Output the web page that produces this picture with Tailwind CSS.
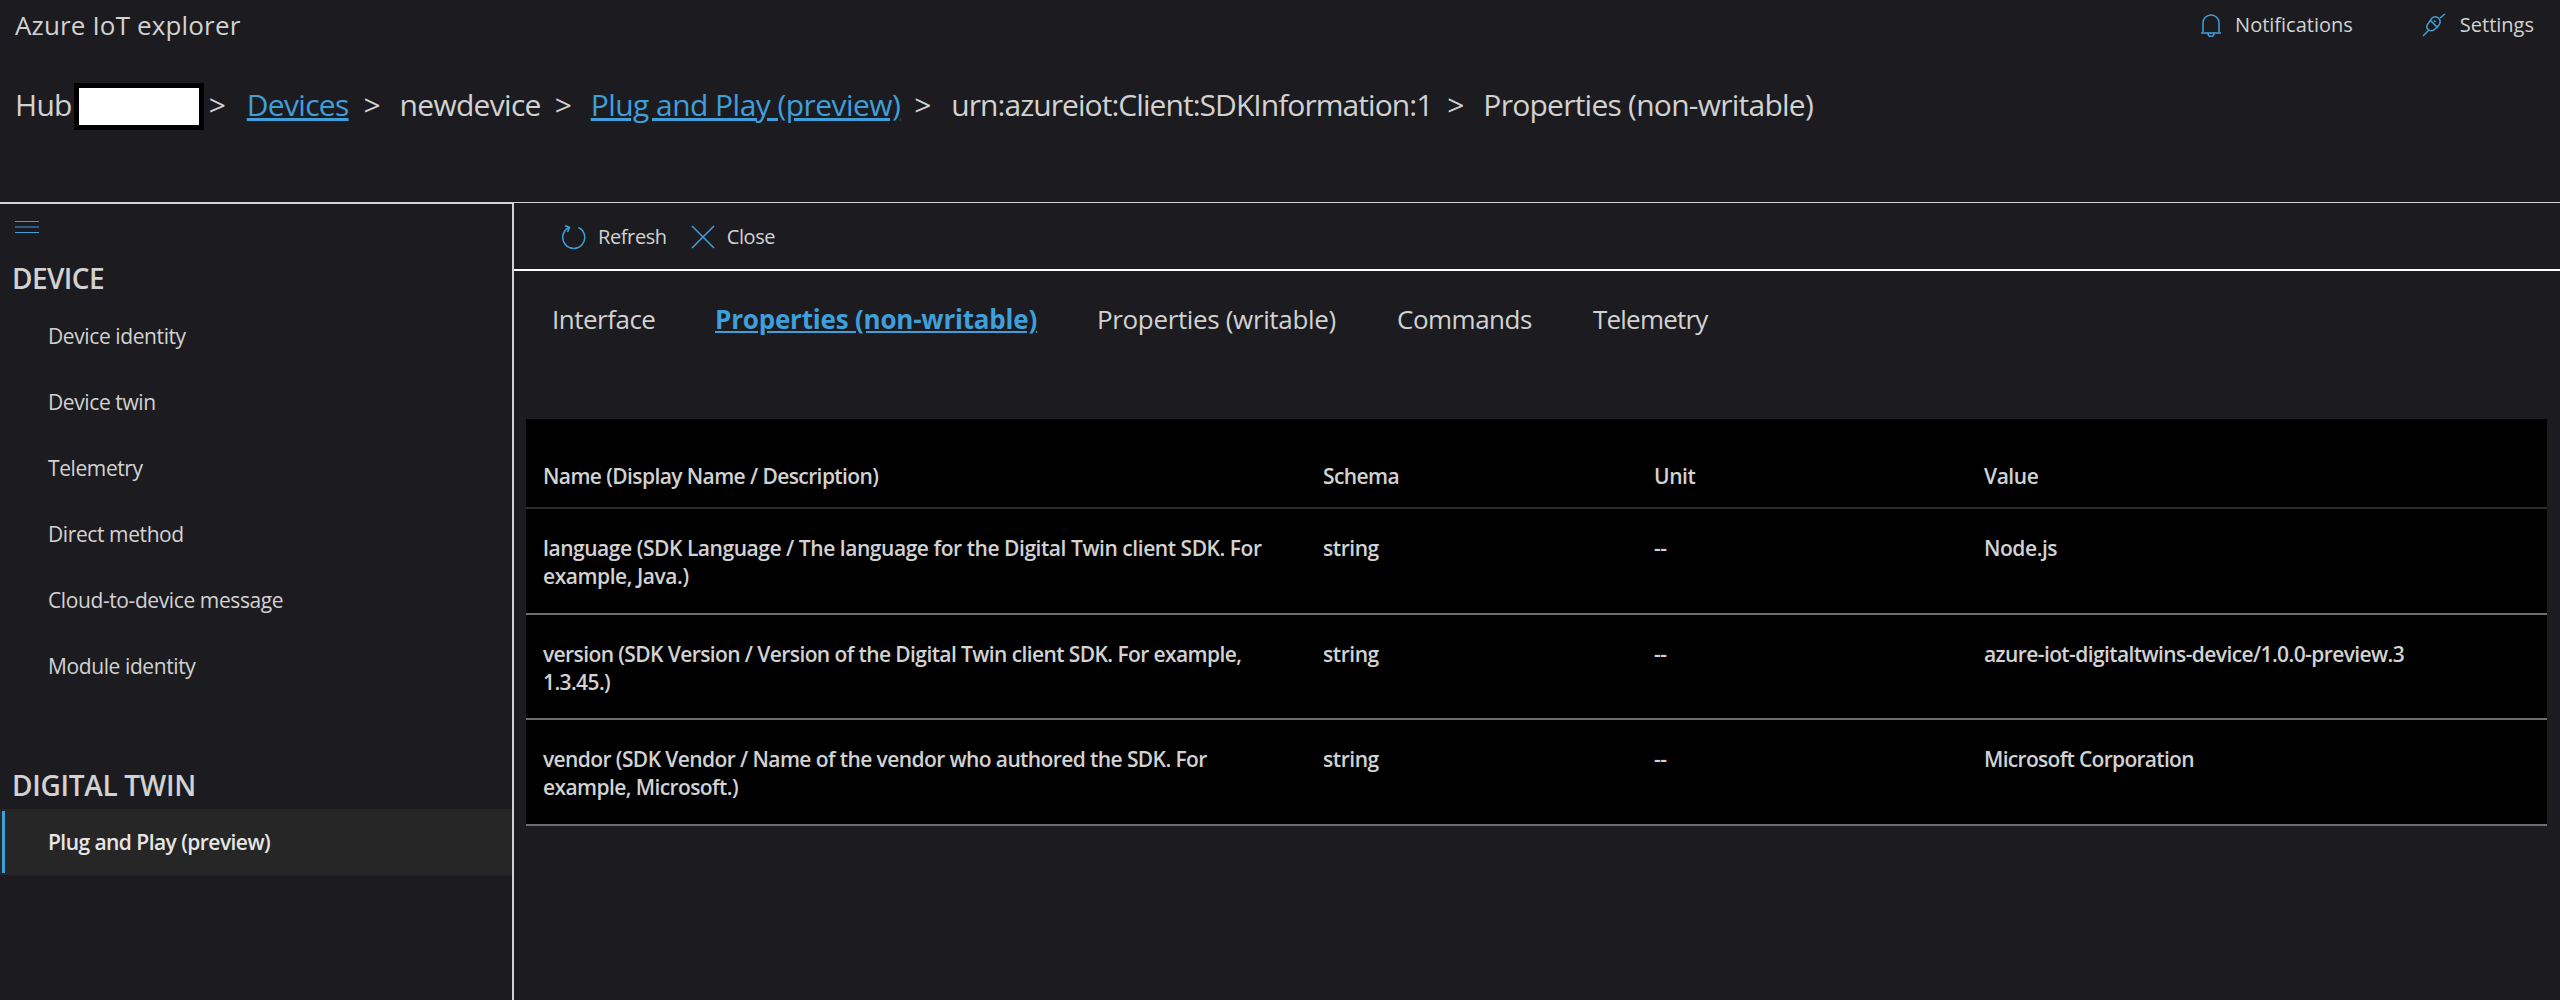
<!DOCTYPE html>
<html lang="en">
<head>
    <meta charset="UTF-8">
    <title>Azure IoT explorer</title>
    <script src="https://cdn.jsdelivr.net/npm/@tailwindcss/browser@4"></script>
</head>
<body class="bg-[#1c1c20] text-[#d2d2d2] font-['Open_Sans',sans-serif] h-screen overflow-hidden">
    <!-- Header -->
    <header class="h-[202px]">
        <div class="flex justify-between items-center h-[50px] pl-[15px] pr-[26px]">
            <h1 class="text-[26px] font-medium tracking-[0.15px]">Azure IoT explorer</h1>
            <div class="flex items-center text-[20px]">
                <svg class="w-[22px] h-[24px] text-[#3f9fdb]" viewBox="0 0 22 24" fill="none" stroke="currentColor" stroke-width="1.5">
                    <path d="M3 19V10a8 8 0 0 1 16 0v9M1 20h20M8 20.5a3 3 0 0 0 6 0"/>
                </svg>
                <span class="ml-[13px]">Notifications</span>
                <svg class="ml-[69px] w-[24px] h-[24px] text-[#3f9fdb]" viewBox="0 0 24 24" fill="none" stroke="currentColor" stroke-width="1.5">
                    <path d="M1 23l6-6M23 1l-5 4M9 8l7 7M7 9.5c-3 3-2.500 5.500-1 7s4.500 2 7-.5l4-4c2-3 1-5.500-.5-7S12 3 10 5z M12 7.500l1.500 1.500"/>
                </svg>
                <span class="ml-[14px]">Settings</span>
            </div>
        </div>
        <nav class="flex items-center h-[47px] mt-[33px] pl-[15px] text-[30px] tracking-[-0.7px]">
            <span class="-translate-y-[2px]">Hub</span>
            <span class="ml-[2px] w-[130px] h-[47px] bg-white border-[5px] border-black"></span>
            <span class="ml-[5px] w-[38px] -translate-y-[2px]">&gt;</span>
            <a href="#" class="text-[#3f9fdb] underline -translate-y-[2px]">Devices</a>
            <span class="ml-[15px] w-[36px] -translate-y-[2px]">&gt;</span>
            <span class="-translate-y-[2px]">newdevice</span>
            <span class="ml-[14px] w-[36px] -translate-y-[2px]">&gt;</span>
            <a href="#" class="text-[#3f9fdb] underline tracking-[-0.55px] -translate-y-[2px]">Plug and Play (preview)</a>
            <span class="ml-[14px] w-[37px] -translate-y-[2px]">&gt;</span>
            <span class="tracking-[-0.95px] -translate-y-[2px]">urn:azureiot:Client:SDKInformation:1</span>
            <span class="ml-[15px] w-[36px] -translate-y-[2px]">&gt;</span>
            <span class="tracking-[-0.75px] -translate-y-[2px]">Properties (non-writable)</span>
        </nav>
    </header>

    <div class="flex h-[798px]">
        <!-- Sidebar -->
        <aside class="w-[512px] shrink-0 border-t-2 border-[#d2d2d2]">
            <svg class="ml-[15px] mt-[17px] w-[24px] h-[12px] text-[#3f9fdb]" viewBox="0 0 24 12" stroke="currentColor" stroke-width="1">
                <path d="M0 .5h24M0 6h24M0 11.500h24"/>
            </svg>
            <h2 class="mt-[27px] ml-[12px] text-[28px] leading-[36px] font-semibold tracking-[-0.6px]">DEVICE</h2>
            <ul class="mt-[8px] text-[21px] tracking-[-0.4px]">
                <li class="h-[66px] pl-[48px] flex items-center">Device identity</li>
                <li class="h-[66px] pl-[48px] flex items-center">Device twin</li>
                <li class="h-[66px] pl-[48px] flex items-center">Telemetry</li>
                <li class="h-[66px] pl-[48px] flex items-center">Direct method</li>
                <li class="h-[66px] pl-[48px] flex items-center">Cloud-to-device message</li>
                <li class="h-[66px] pl-[48px] flex items-center">Module identity</li>
            </ul>
            <h2 class="mt-[67px] ml-[12px] text-[28px] leading-[36px] font-semibold tracking-[-0.3px]">DIGITAL TWIN</h2>
            <div class="mt-[6px] h-[66px] bg-[#262626] flex items-center pl-[2px]">
                <div class="w-[3px] h-[62px] bg-[#3f9fdb]"></div>
                <span class="ml-[43px] pt-[2px] text-[21px] font-semibold tracking-[-0.55px] text-[#e6e6e6]">Plug and Play (preview)</span>
            </div>
        </aside>

        <!-- Main Content -->
        <main class="flex-1 border-l-2 border-t border-[#d2d2d2]">
            <div class="h-[68px] pt-[2px] border-b-2 border-white flex items-center pl-[47px] text-[20px] tracking-[-0.4px]">
                <svg class="w-[25px] h-[25px] text-[#3f9fdb]" viewBox="0 0 25 25" fill="none" stroke="currentColor" stroke-width="1.500">
                    <path d="M8 2.500a11 11 0 1 0 9.500 0M4 .5l4.500 2-2 4.500"/>
                </svg>
                <span class="ml-[12px]">Refresh</span>
                <svg class="ml-[24px] w-[24px] h-[24px] text-[#3f9fdb]" viewBox="0 0 24 24" fill="none" stroke="currentColor" stroke-width="1.500">
                    <path d="M1 1l22 22M23 1L1 23"/>
                </svg>
                <span class="ml-[12px]">Close</span>
            </div>

            <div class="flex h-[148px] pt-[30px] pl-[38px] text-[26px] leading-[36px] tracking-[-0.5px]">
                <span class="w-[163px]">Interface</span>
                <a href="#" class="w-[382px] font-bold tracking-[-0.2px] text-[#3f9fdb] underline">Properties (non-writable)</a>
                <span class="w-[300px] tracking-[-0.35px]">Properties (writable)</span>
                <span class="w-[196px]">Commands</span>
                <span class="tracking-[-0.8px]">Telemetry</span>
            </div>

            <table class="ml-[12px] w-[2021px] bg-black table-fixed text-[21px] leading-[28px] font-semibold tracking-[-0.45px] text-left">
                <thead>
                    <tr class="h-[89px] border-b-2 border-[#2b2b2b]">
                        <th class="w-[797px] pl-[17px] pt-[25px] font-semibold tracking-[-0.6px]">Name (Display Name / Description)</th>
                        <th class="w-[331px] pt-[25px] font-semibold tracking-[-0.6px]">Schema</th>
                        <th class="w-[330px] pt-[25px] font-semibold">Unit</th>
                        <th class="pt-[25px] font-semibold">Value</th>
                    </tr>
                </thead>
                <tbody>
                    <tr class="h-[106px] border-b-2 border-[#6e6e6e]">
                        <td class="pl-[17px] align-top pt-[25px]">language (SDK Language / The language for the Digital Twin client SDK. For<br>example, Java.)</td>
                        <td class="align-top pt-[25px]">string</td>
                        <td class="align-top pt-[25px]">--</td>
                        <td class="align-top pt-[25px]">Node.js</td>
                    </tr>
                    <tr class="h-[105px] border-b-2 border-[#6e6e6e]">
                        <td class="pl-[17px] align-top pt-[25px] tracking-[-0.6px]">version (SDK Version / Version of the Digital Twin client SDK. For example,<br>1.3.45.)</td>
                        <td class="align-top pt-[25px]">string</td>
                        <td class="align-top pt-[25px]">--</td>
                        <td class="align-top pt-[25px] tracking-[-0.6px]">azure-iot-digitaltwins-device/1.0.0-preview.3</td>
                    </tr>
                    <tr class="h-[106px] border-b-2 border-[#6e6e6e]">
                        <td class="pl-[17px] align-top pt-[25px] tracking-[-0.6px]">vendor (SDK Vendor / Name of the vendor who authored the SDK. For<br>example, Microsoft.)</td>
                        <td class="align-top pt-[25px]">string</td>
                        <td class="align-top pt-[25px]">--</td>
                        <td class="align-top pt-[25px] tracking-[-0.7px]">Microsoft Corporation</td>
                    </tr>
                </tbody>
            </table>
        </main>
    </div>
</body>
</html>
